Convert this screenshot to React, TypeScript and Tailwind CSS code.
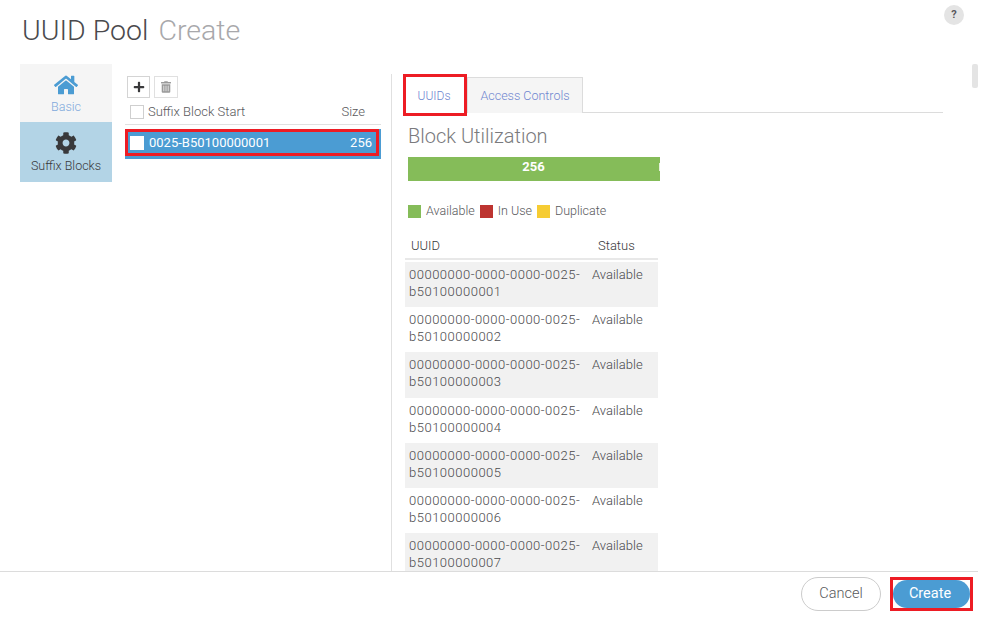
import { FaCog, FaHome, FaPlus, FaTrashAlt } from "react-icons/fa";

const uuids = ["000000000001", "000000000002", "000000000003", "000000000004", "000000000005", "000000000006", "000000000007"];

function UuidRow({ suffix, shaded }: { suffix: string; shaded: boolean }) {
  return (
    <div className={`flex h-[45.2px] shrink-0 text-[13px] font-light leading-[17px] text-[#4a4a4d] ${shaded ? "bg-[#f1f1f1]" : ""}`}>
      <div className="w-[187px] pl-[4px] pt-[4px] tracking-[0.5px]">
        00000000-0000-0000-0025-
        <br />
        b50100{suffix.slice(6)}
      </div>
      <div className="pt-[4px]">Available</div>
    </div>
  );
}

function LegendItem({ color, label }: { color: string; label: string }) {
  return (
    <div className="flex items-center gap-[5px]">
      <span className={`h-[13px] w-[13px] ${color}`} />
      <span>{label}</span>
    </div>
  );
}

export default function App() {
  return (
    <div className="flex h-[629px] w-[987px] flex-col overflow-hidden bg-white font-['Roboto','Liberation_Sans',sans-serif] text-[#58585b]">
      <header className="flex h-[64px] shrink-0 items-start justify-between pl-[22px] pr-[23px]">
        <h1 className="mt-[11px] text-[28.5px] font-light leading-[40px] text-[#4a4a4d]">
          UUID Pool <span className="ml-[3px] text-[#a8a8ab]">Create</span>
        </h1>
        <div className="mt-[5px] flex h-[20px] w-[20px] items-center justify-center rounded-full bg-[#e4e4e4] text-[11px] font-bold text-[#58585b]">
          ?
        </div>
      </header>

      <main className="flex min-h-0 flex-1 overflow-hidden">
        <nav className="ml-[20px] w-[92px] shrink-0">
          <div className="flex h-[58px] flex-col items-center bg-[#f5f5f5] pt-[9px] text-[#7fa9dc]">
            <FaHome className="h-[24px] w-[24px] text-[#4b9cd3]" />
            <span className="mt-[2px] text-[12.5px] font-light leading-[16px]">Basic</span>
          </div>
          <div className="flex h-[60px] flex-col items-center bg-[#b3d4e6] pt-[10px] text-[#39393b]">
            <FaCog className="h-[22px] w-[22px]" />
            <span className="mt-[4px] text-[12.5px] font-light leading-[16px]">Suffix Blocks</span>
          </div>
        </nav>

        <section className="ml-[13px] w-[256px] shrink-0">
          <div className="mt-[12px] flex gap-[4px] pl-[2px]">
            <button type="button" className="flex h-[22px] w-[23px] items-center justify-center border border-[#d4d4d4] text-[#39393b]">
              <FaPlus className="h-[12px] w-[12px]" />
            </button>
            <button type="button" className="flex h-[22px] w-[24px] items-center justify-center border border-[#e0e0e0] text-[#9a9a9a]">
              <FaTrashAlt className="h-[12px] w-[10px]" />
            </button>
          </div>
          <div className="mt-[1px] flex h-[26px] items-center border-b border-[#e0e0e0] pl-[5px] pr-[16px] text-[13px] font-light">
            <span className="mr-[4px] h-[14px] w-[14px] border border-[#cfcfcf]" />
            <span className="flex-1">Suffix Block Start</span>
            <span>Size</span>
          </div>
          <div className="mt-[4px] h-[30px] bg-[#4b9cd3] pr-[2px]">
            <div className="flex h-[27px] items-center border-[3px] border-[#ed1c24] bg-[#4b9cd3] pl-[2px] pr-[4px] text-[13px] text-white">
              <span className="mr-[5px] h-[14px] w-[14px] bg-white" />
              <span className="flex-1">0025-B50100000001</span>
              <span>256</span>
            </div>
          </div>
        </section>

        <div className="ml-[10px] mt-[10px] w-px shrink-0 bg-[#e0e0e0]" />

        <section className="ml-[11px] flex w-[540px] min-w-0 flex-col">
          <div className="mt-[10px] flex h-[39px] shrink-0 items-start border-b border-[#dcdcdc]">
            <div className="relative z-10 flex h-[42px] w-[64px] items-center justify-center border-[3px] border-[#ed1c24] bg-white pr-[2px] pt-[2px] text-[12px] font-light text-[#6f86d0]">
              UUIDs
            </div>
            <div className="mt-[3px] flex h-[36px] w-[116px] items-center justify-center border border-b-0 border-[#dcdcdc] bg-[#f5f5f5] pt-[2px] text-[12.5px] font-light text-[#6f86d0]">
              Access Controls
            </div>
          </div>
          <h2 className="mt-[10px] pl-[5px] text-[20px] font-light leading-[26px] text-[#7a7a7d]">Block Utilization</h2>
          <div className="ml-[5px] mt-[8px] flex h-[24px] w-[252px] shrink-0 items-center bg-[#85bc59] pb-[4px] text-[13px] font-bold text-white">
            <span className="flex-1 text-center">256</span>
            <span className="h-[8px] w-px bg-[#e6f0dc]" />
          </div>
          <div className="ml-[5px] mt-[23px] flex h-[14px] shrink-0 items-center gap-[5px] text-[12.5px] font-light leading-[14px]">
            <LegendItem color="bg-[#85bc59]" label="Available" />
            <LegendItem color="bg-[#bd3430]" label="In Use" />
            <LegendItem color="bg-[#f6cc33]" label="Duplicate" />
          </div>
          <div className="ml-[2px] mt-[15px] w-[253px] shrink-0">
            <div className="flex h-[27px] items-center border-b-2 border-[#e8e8e8] text-[13px] font-light text-[#39393b]">
              <span className="w-[193px] pl-[6px]">UUID</span>
              <span>Status</span>
            </div>
            <div className="mt-[2px] flex flex-col">
              {uuids.map((suffix, i) => (
                <UuidRow key={suffix} suffix={suffix} shaded={i % 2 === 0} />
              ))}
            </div>
          </div>
        </section>

        <div className="ml-[29px] h-[24px] w-[6px] rounded-[2px] bg-[#e4e4e4]" />
      </main>

      <footer className="mr-[9px] flex h-[58px] shrink-0 items-start justify-end border-t border-[#dcdcdc] pr-[5px]">
        <button type="button" className="mt-[5px] h-[34px] w-[80px] rounded-full border border-[#cccccc] bg-white text-[14.5px] font-light text-[#58585b]">
          Cancel
        </button>
        <div className="ml-[9px] mt-[5px] border-[3px] border-[#ed1c24] bg-white">
          <button type="button" className="block h-[28px] w-[77px] rounded-full bg-[#4b9cd3] pr-[3px] text-[14.5px] text-white">
            Create
          </button>
        </div>
      </footer>
    </div>
  );
}
